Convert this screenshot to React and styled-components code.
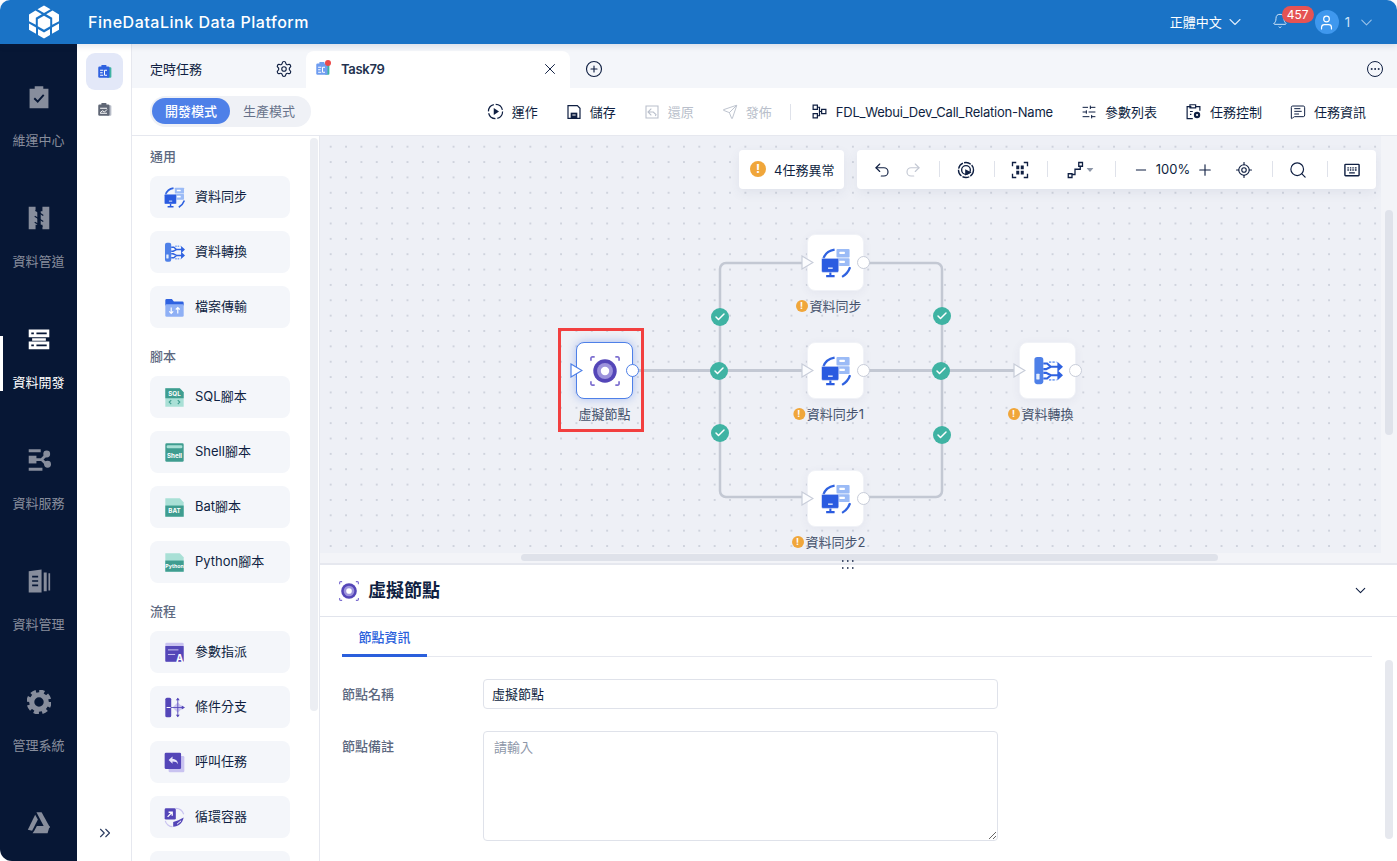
import React from 'react';
import styled, { createGlobalStyle } from 'styled-components';
import {
  ChevronDown, Bell, User, Settings, X, CirclePlus, Ellipsis, Undo2, Redo2, Minus, Plus, Search,
  LocateFixed, Send, SlidersHorizontal, MessageSquareText, ChevronsRight, Check,
} from 'lucide-react';

const Global = createGlobalStyle`
  html, body { margin: 0; padding: 0; height: 100%; overflow: hidden; background: #fff; }
  #root { height: 100%; }
  * { box-sizing: border-box; }
  body { font-family: Inter, "Noto Sans CJK TC", sans-serif; font-size: 13px; color: #0f1f42; }
`;

const Page = styled.div`height: 861px; display: flex; flex-direction: column; overflow: hidden;`;
const Header = styled.header`
  height: 44px; flex: none; background: #1a73c6; color: #fff; display: flex; align-items: center;
  border-radius: 10px 10px 0 0; padding-left: 28px; box-shadow: 0 2px 6px rgba(20,40,90,.12); position: relative; z-index: 2;
`;
const Title = styled.div`font-size: 16px; font-weight: 500; margin-left: 28px; letter-spacing: .52px;`;
const HeaderRight = styled.div`margin-left: auto; display: flex; align-items: center; padding-right: 21px;`;
const Lang = styled.div`display: flex; align-items: center; gap: 3px; margin-right: 27px; margin-top: -1px;`;
const BellWrap = styled.div`position: relative; width: 16px; height: 18px; margin-right: 27px; display: flex;`;
const Badge = styled.span`
  position: absolute; left: 10px; top: -7px; width: 32px; height: 17px; border-radius: 9px; background: #e55353; color: #fff;
  font-size: 12px; line-height: 17px; text-align: center;
`;
const Avatar = styled.div`width: 24px; height: 24px; border-radius: 50%; background: #3f98ee; display: flex; align-items: center; justify-content: center;`;
const UserName = styled.span`margin: 0 7px 0 6px; color: #cfe3f7; font-size: 13px;`;

const Body = styled.div`flex: 1; display: flex; min-height: 0;`;
const Nav = styled.nav`
  width: 77px; flex: none; background: #071735; border-radius: 0 0 0 12px; padding-top: 41px;
  display: flex; flex-direction: column;
`;
const NavItem = styled.div`
  position: relative; height: 121px; flex: none; display: flex; flex-direction: column; align-items: center; gap: 21px;
  color: ${p => (p.$active ? '#fff' : '#878d9c')}; font-size: 13px; line-height: 20px;
  &::before {
    content: ''; display: ${p => (p.$active ? 'block' : 'none')}; position: absolute; left: 0; top: 9px; width: 3px; height: 55px; background: #fff;
  }
`;
const Side = styled.aside`
  width: 55px; flex: none; background: #fff; border-right: 1px solid #e6e8ef; display: flex; flex-direction: column; align-items: center; padding: 9px 0 0; position: relative;
`;
const SideBtn = styled.div`
  width: 37px; height: 37px; border-radius: 9px; background: ${p => (p.$active ? '#e3e8f8' : 'transparent')};
  display: flex; align-items: center; justify-content: center; margin-bottom: ${p => (p.$active ? '2px' : '0')};
  margin-top: ${p => (p.$active ? '0' : '-1px')};
`;
const Expand = styled.div`margin-top: auto; margin-bottom: 19px; padding-left: 2px; color: #2b3c61; display: flex;`;

const Main = styled.main`flex: 1; min-width: 0; display: flex; flex-direction: column;`;
const TabBar = styled.div`height: 44px; flex: none; background: #f4f6fa; display: flex; align-items: flex-end;`;
const PlainTab = styled.div`width: 174px; height: 37px; display: flex; align-items: center; padding: 0 13px 2px 18px; justify-content: space-between; color: #0f1f42;`;
const ActiveTab = styled.div`
  width: 264px; height: 37px; background: #fff; border-radius: 8px 8px 0 0; display: flex; align-items: center; padding: 0 11px 2px 9px; font-weight: 500; color: #24324f;
`;
const TabName = styled.span`margin-left: 11px; flex: 1; font-weight: 600; letter-spacing: -.3px;`;
const AddBtn = styled.div`margin-left: 15px; height: 37px; display: flex; align-items: center; padding-bottom: 2px;`;
const MoreBtn = styled.div`margin-left: auto; margin-right: 14px; height: 37px; display: flex; align-items: center; padding-bottom: 2px;`;
const DotsCircle = styled.span`width: 16px; height: 16px; border: 1.3px solid #0f1f42; border-radius: 50%; display: flex; align-items: center; justify-content: center;`;

const Toolbar = styled.div`height: 48px; flex: none; background: #fff; border-bottom: 1px solid #e6e8ef; display: flex; align-items: center; padding: 0 31px 0 18px;`;
const ModeSwitch = styled.div`width: 161px; height: 31px; border-radius: 16px; background: #eff1f6; padding: 2px; display: flex; align-items: flex-start;`;
const ModeBtn = styled.div`
  height: 26px; width: 78px; border-radius: 13px; text-align: center; line-height: 26px; font-size: 13px;
  background: ${p => (p.$active ? '#4e80e8' : 'transparent')}; color: ${p => (p.$active ? '#fff' : '#67728a')}; font-weight: ${p => (p.$active ? 500 : 400)};
`;
const Actions = styled.div`margin-left: auto; display: flex; align-items: center; gap: 28px;`;
const Action = styled.div`display: flex; align-items: center; gap: 8px; color: ${p => (p.$off ? '#b9bfcb' : '#0f1f42')}; white-space: nowrap;`;
const FlowName = styled.span`letter-spacing: -.22px;`;
const VRule = styled.span`width: 1px; height: 16px; background: #dfe2ea; flex: none; margin: 0 -8px 0 -10px;`;

const Content = styled.div`flex: 1; display: flex; min-height: 0;`;
const Palette = styled.div`width: 188px; flex: none; border-right: 1px solid #e6e8ef; padding: 0 29px 0 18px; overflow: hidden; position: relative;`;
const PaletteBar = styled.div`position: absolute; right: 1px; top: 2px; width: 8px; height: 573px; border-radius: 4px; background: #eceef3;`;
const SectionTitle = styled.div`color: #5c6880; font-weight: 500; line-height: 20px; margin: 18px 0 10px; &:first-child { margin-top: 10px; }`;
const Card = styled.div`
  height: 42px; border-radius: 8px; background: #f4f6fa; display: flex; align-items: center; gap: 10px; padding-left: 14px; margin-bottom: 13px; color: #0f1f42; white-space: nowrap;
  & > span { padding-bottom: 3px; }
`;

const Work = styled.div`flex: 1; min-width: 0; display: flex; flex-direction: column;`;
const CanvasFrame = styled.div`flex: 1; min-height: 0; background: #f3f4f8; padding: 0 16px 10px 0; position: relative; border-bottom: 2px solid #e6e8ef;`;
const Canvas = styled.div`
  width: 100%; height: 100%; position: relative; overflow: hidden; background-color: #eef0f6;
  background-image: radial-gradient(circle, #cfd3dd 1px, transparent 1.3px); background-size: 15.36px 15.36px; background-position: 3px 3px;
`;
const Edges = styled.svg`position: absolute; left: 0; top: 0; width: 100%; height: 100%;`;
const FloatRow = styled.div`position: absolute; top: 14px; right: 5px; display: flex; gap: 13px;`;
const FloatCard = styled.div`
  height: 39px; background: #fff; border-radius: 4px; box-shadow: 0 4px 12px rgba(60,75,120,.08); display: flex; align-items: center;
`;
const AlertCard = styled(FloatCard)`width: 105px; padding: 0 0 1px 11px; gap: 8px;`;
const ToolCard = styled(FloatCard)`width: 519px;`;
const Tool = styled.span`
  position: absolute; left: ${p => p.$x}px; top: 50%; transform: translate(-50%, -50%); display: flex; color: ${p => p.$c || '#0f1f42'}; white-space: nowrap;
`;
const ZoomText = styled(Tool)`margin-top: -1px;`;
const ToolRule = styled.span`position: absolute; left: ${p => p.$x}px; top: 11px; width: 1px; height: 16px; background: #dfe2ea;`;
const ToolInner = styled.div`position: relative; width: 100%; height: 100%;`;

const NodeWrap = styled.div`position: absolute; left: ${p => p.$x}px; top: ${p => p.$y}px; width: 57px; height: 57px;`;
const NodeBox = styled.div`
  width: 57px; height: 57px; border-radius: 8px; background: #fff; display: flex; align-items: center; justify-content: center;
  border: 1px solid ${p => (p.$sel ? '#4e80e8' : '#f0f2f7')};
  box-shadow: ${p => (p.$sel ? '0 0 10px rgba(80,125,235,.45)' : '0 2px 10px rgba(60,75,120,.06)')};
`;
const InPort = styled.svg`position: absolute; left: -6px; top: 21px;`;
const OutPort = styled.span`
  position: absolute; right: -6px; top: 22px; width: 13px; height: 13px; border-radius: 50%; background: #fff; border: 1.3px solid ${p => (p.$sel ? '#4e80e8' : '#c8cdd9')};
`;
const NodeLabel = styled.div`
  position: absolute; left: 50%; top: 62px; transform: translateX(-50%); white-space: nowrap; color: #45526c; line-height: 20px;
`;
const WarnDot = styled.span`
  position: absolute; right: calc(100% + 2px); top: 4px; width: 12px; height: 12px; border-radius: 50%; background: #f0a63a; color: #fff; font-size: 9px; font-weight: 700; line-height: 12px; text-align: center;
`;
const BigWarn = styled(WarnDot)`position: static; width: 16px; height: 16px; line-height: 16px; font-size: 12px; flex: none;`;
const Selection = styled.div`position: absolute; left: 238px; top: 192px; width: 86px; height: 104px; border: 3px solid #f23f3f;`;
const Check2 = styled.span`
  position: absolute; left: ${p => p.$x - 9}px; top: ${p => p.$y - 9}px; width: 18px; height: 18px; border-radius: 50%; background: #3fb3a3; color: #fff; display: flex; align-items: center; justify-content: center;
`;
const HBar = styled.div`position: absolute; left: 201px; bottom: 2px; width: 697px; height: 7px; border-radius: 4px; background: #dfe2ea;`;
const VBar = styled.div`position: absolute; right: 4px; top: 74px; width: 8px; height: 225px; border-radius: 4px; background: #dfe2ea;`;
const Grip = styled.svg`position: absolute; left: 521px; bottom: -7px; z-index: 1;`;

const Panel = styled.section`height: 296px; flex: none; background: #fff; position: relative; overflow: hidden;`;
const PanelHead = styled.div`height: 52px; border-bottom: 1px solid #e1e4ec; display: flex; align-items: center; padding: 0 28px 0 19px; gap: 9px;`;
const PanelTitle = styled.div`font-size: 18px; font-weight: 700; color: #0f1f42; margin-top: -3px;`;
const Chevron = styled.span`margin-left: auto; display: flex;`;
const Tabs = styled.div`height: 40px; margin: 0 25px 0 22px; border-bottom: 1px solid #e6e8ef; display: flex; align-items: flex-end;`;
const TabItem = styled.div`width: 85px; height: 41px; padding-top: 11px; text-align: center; color: #2a5fdc; font-weight: 500; border-bottom: 3px solid #2a5fdc; margin-bottom: -1px;`;
const Form = styled.div`padding: 22px 0 0 22px; display: grid; grid-template-columns: 141px 515px; row-gap: 22px;`;
const FieldLabel = styled.label`color: #5c6880; font-weight: 500; line-height: 30px;`;
const Input = styled.input`
  width: 515px; height: 30px; border: 1px solid #dfe2ea; border-radius: 4px; padding: 0 8px 2px; font: inherit; color: #0f1f42; outline: none; background: #fff;
`;
const Area = styled.textarea`
  width: 515px; height: 110px; border: 1px solid #dfe2ea; border-radius: 4px; padding: 5px 10px; font: inherit; outline: none; display: block; background: #fff;
  &::placeholder { color: #8d96a8; }
`;
const PanelBar = styled.div`position: absolute; right: 4px; top: 95px; width: 8px; height: 179px; border-radius: 4px; background: #e6e8ee;`;

/* ---------- drawings ---------- */
const I = ({ size = 24, box = 32, children }) => <svg width={size} height={size} viewBox={`0 0 ${box} ${box}`} fill="none" style={{ flex: 'none', display: 'block' }}>{children}</svg>;
const N = ({ children }) => <svg width="24" height="24" viewBox="2 2 28 28" fill="none" style={{ flex: 'none', display: 'block' }}>{children}</svg>;

const Logo = () => (
  <svg width="32" height="34" viewBox="0 0 32 34" style={{ flex: 'none' }} fill="#fff">
    <path d="M16 .5l6.500 3.700L16 8 9.500 4.200z" />
    <path d="M7.500 5.600l6.300 3.700-6 3.500v7L1 16.200V9.400z" />
    <path d="M24.500 5.600L31 9.400v6.800l-6.800 3.600v-7l-6-3.500z" />
    <path d="M16 10.800l6.200 3.500v6.900L16 24.800l-6.200-3.600v-6.900z" />
    <path d="M1 18.600l7 4v6.200l-7-4zM31 18.600v6.200l-7 4v-6.200z" />
    <path d="M10 24l6 3.400 6-3.400v6.100L16 33.500l-6-3.400z" />
  </svg>
);
const NavCheck = () => <N><path d="M5 6.500h6V3.500h10v3h6V29H5z" fill="currentColor" /><path d="M10.500 17.500l4 4 7-8" stroke="#071735" strokeWidth="2.200" /></N>;
const NavPipe = () => <N><path d="M4 3h8v5h2v16h-2v5H4zM28 3v26h-8v-5h-2V8h2V3z" fill="currentColor" /><path d="M12 7l9 6M11 14l10 6M11 21l9 5" stroke="#071735" strokeWidth="1.500" /></N>;
const NavDev = () => <N><path d="M4 5h24v9H4zM8 15h16v3H8zM4 19h24v9H4z" fill="currentColor" /><path d="M7 9.500h3M13 9.500h12M7 23.500h3M13 23.500h12" stroke="#071735" strokeWidth="2.200" /></N>;
const NavSvc = () => <N><path d="M4 3.500h14v3.500H4zM4 25h16v3.500H4z" fill="currentColor" /><path d="M4 11h9v9H4z" fill="currentColor" /><path d="M12 15.500h7l7-7M19 15.500l7 7" stroke="currentColor" strokeWidth="3.200" /><circle cx="25" cy="9" r="4" fill="currentColor" /><circle cx="26" cy="21" r="4" fill="currentColor" /></N>;
const NavData = () => <N><path d="M4 4.500l15-2v27H4z" fill="currentColor" /><path d="M21.500 6h3.500v22h-3.500zM27 7h2v20h-2z" fill="currentColor" /><path d="M8 11h7M8 16h7M8 21h7" stroke="#071735" strokeWidth="2" /></N>;
const NavGear = () => <N><circle cx="16" cy="16" r="8.500" stroke="currentColor" strokeWidth="6" /><circle cx="16" cy="16" r="12.500" stroke="currentColor" strokeWidth="4.200" strokeDasharray="6 3.800" /></N>;
const NavDrive = () => <N><path d="M13 3.500h6l10 18h-6.500z" fill="currentColor" /><path d="M11.500 6.500l3.200 5.500L8 25l-5-1z" fill="currentColor" /><path d="M10.500 25l3-5.500h15L26 28H8.500z" fill="currentColor" /></N>;

const TaskIcon = ({ dot }) => (
  <span style={{ position: 'relative', display: 'flex' }}>
    <I size={15} box={24}>
      <rect x="16" y="5" width="7" height="17" rx="1.500" fill="#3fb3a3" />
      <rect x="2" y="4" width="18" height="18" rx="2" fill={dot ? '#6f9df0' : '#2f62e0'} />
      <rect x="7" y="1.500" width="8" height="4" rx="1" fill={dot ? '#6f9df0' : '#2f62e0'} />
      <path d="M5 10h5M5 14h4M5 18h5M12 10h4M12 18h4M12 10v8" stroke="#fff" strokeWidth="1.700" />
    </I>
    {dot && <span style={{ position: 'absolute', right: -1, top: -1, width: 6, height: 6, borderRadius: 3, background: '#ec4a4a' }} />}
  </span>
);
const TaskGray = () => (
  <I size={15} box={24}>
    <rect x="16" y="5" width="7" height="17" rx="1.500" fill="#b8bdc8" />
    <rect x="2" y="4" width="18" height="18" rx="2" fill="#5f6675" />
    <rect x="7" y="1.500" width="8" height="4" rx="1" fill="#5f6675" />
    <path d="M5 10h11M5 17l4-3 3 2 4-4M5 18h11" stroke="#fff" strokeWidth="1.600" />
  </I>
);
const Sync = ({ size = 21 }) => (
  <I size={size}>
    <rect x="16.500" y="1" width="14" height="9" rx="1" fill="#9bbbf6" />
    <rect x="16.500" y="10.800" width="14" height="8.500" rx="1" fill="#9bbbf6" />
    <rect x="19.500" y="4" width="6" height="2.500" rx=".8" fill="#fff" />
    <rect x="19.500" y="13.500" width="6" height="2.500" rx=".8" fill="#fff" />
    <path d="M2.500 11.500C4 6.500 8.500 2.700 14.500 1.700M31 20.500c-1.500 4.500-4.500 8-8.500 10.300" stroke="#2f62e0" strokeWidth="2.400" />
    <rect x=".5" y="11" width="18.500" height="15" rx="1.500" fill="#2a5be0" stroke="#fff" strokeWidth=".6" />
    <path d="M5.500 30h9M10 26V30" stroke="#2a5be0" strokeWidth="2.200" />
    <path d="M7.500 21.500h5" stroke="#fff" strokeWidth="1.300" />
  </I>
);
const Transform = ({ size = 21 }) => (
  <I size={size}>
    <rect x="1.500" y="1" width="9.500" height="29" rx="3" fill="#4e80e8" />
    <rect x="3.500" y="19" width="3.500" height="6" rx=".5" fill="#e6eefc" />
    <path d="M11 8h4l4 3.500h9M11 14h3l5-2.500M11 18h3l5 2.500M11 24h4l4-3.500h9" stroke="#2f62e0" strokeWidth="2.200" />
    <path d="M26 6l6 5.500-6 5.500zM26 15l6 5.500-6 5.500z" fill="#2f62e0" />
    <path d="M17 6.500h8M17 25.500h8" stroke="#7fa6f2" strokeWidth="2" strokeDasharray="2.500 1.200" />
  </I>
);
const Folder = () => (
  <I size={21}>
    <path d="M2 5a2 2 0 012-2h8l3 4h13a2 2 0 012 2v4H2z" fill="#2f62e0" />
    <rect x="2" y="11" width="28" height="19" rx="2" fill="#8fb0f5" />
    <path d="M11 16v9M8 22l3 3 3-3M21 25v-9M18 19l3-3 3 3" stroke="#fff" strokeWidth="1.800" />
  </I>
);
const Script = ({ label, top }) => (
  <I size={21}>
    <path d="M2 2h22l6 6v22H2z" fill="#a9e0d6" />
    {top ? <path d="M2 2h22l6 6v9H2z" fill="#3f9d90" /> : <rect x="2" y="13" width="28" height="17" fill="#3f9d90" />}
    <text x="16" y={top ? 13 : 25} textAnchor="middle" fontSize={label.length > 4 ? 8 : 9.500} fontWeight="700" fill="#fff" fontFamily="Inter, sans-serif">{label}</text>
    {top && <path d="M11 20l-3 3 3 3M21 20l3 3-3 3" stroke="#3f9d90" strokeWidth="1.800" />}
  </I>
);
const Shell = () => (
  <I size={21}>
    <rect x="2" y="2" width="28" height="28" rx="2" fill="#3f9d90" />
    <rect x="4" y="5" width="24" height="4.500" rx="2" fill="#a9e0d6" />
    <text x="16" y="24" textAnchor="middle" fontSize="9.500" fontWeight="700" fill="#fff" fontFamily="Inter, sans-serif">Shell</text>
  </I>
);
const Assign = () => (
  <I size={21}>
    <rect x="2" y="1" width="28" height="29" rx="2" fill="#c9c3f0" />
    <rect x="2" y="6" width="28" height="24" rx="1" fill="#5446b8" />
    <path d="M6 12h16M6 19h11" stroke="#c9c3f0" strokeWidth="1.500" />
    <text x="24" y="30" textAnchor="middle" fontSize="15" fontWeight="700" fill="#fff" fontFamily="Inter, sans-serif">A</text>
  </I>
);
const Branch = () => (
  <I size={21}>
    <rect x="2" y="1" width="9" height="30" rx="2.500" fill="#5446b8" />
    <path d="M21 8l8 8-8 8-8-8z" fill="#c9c3f0" />
    <path d="M21 2v28M4 16h26" stroke="#5446b8" strokeWidth="1.300" />
    <path d="M18 5l3-4 3 4zM18 27l3 4 3-4zM27 13l5 3-5 3z" fill="#5446b8" />
    <path d="M4 16h6" stroke="#fff" strokeWidth="1.500" />
  </I>
);
const CallTask = () => (
  <I size={21}>
    <rect x="7" y="6" width="24" height="25" rx="2" fill="#c9c3f0" />
    <rect x="1" y="1" width="25" height="25" rx="2" fill="#5446b8" />
    <path d="M7 12l6-5v3.500c6 0 8 4 8.500 8-2-3-4.500-4-8.500-4V18z" fill="#e8e6fa" />
  </I>
);
const Loop = () => (
  <I size={21}>
    <rect x="1" y="2" width="17" height="17" rx="2" fill="#5446b8" />
    <path d="M14 30c8 0 14-5 16-14l-8 4-8 3z" fill="#5446b8" />
    <path d="M18 2c6 0 10 3 12 9M2 21c1 5 6 9 11 9" stroke="#c9c3f0" strokeWidth="1.800" />
    <path d="M5.500 15l7-7M7 8h5.500v5.500" stroke="#fff" strokeWidth="2" />
    <path d="M26 21l-6 5" stroke="#fff" strokeWidth="1.500" />
  </I>
);
const Virtual = ({ size = 30 }) => (
  <I size={size}>
    <circle cx="16" cy="16" r="12.500" fill="#5446b8" />
    <circle cx="16" cy="16" r="8.500" fill="#9d93dc" />
    <circle cx="16" cy="16" r="4.500" fill="#fff" />
    <path d="M1 5V2.500A1.500 1.500 0 012.500 1H5M27 1h2.500A1.500 1.500 0 0131 2.500V5M31 27v2.500a1.500 1.500 0 01-1.500 1.500H27M5 31H2.500A1.500 1.500 0 011 29.500V27" stroke="#7d6fd0" strokeWidth="1.800" />
  </I>
);
const RunIcon = () => <I size={17} box={24}><circle cx="12" cy="12" r="10" stroke="#0f1f42" strokeWidth="1.700" strokeDasharray="13 2.700" /><path d="M9.500 7l7.500 5-7.500 5z" fill="#0f1f42" /></I>;
const SaveIcon = () => <I size={16} box={24}><path d="M3 2.500h14l4 4v15H3z" stroke="#0f1f42" strokeWidth="1.800" /><path d="M7 13h10v8.500H7z" fill="#0f1f42" /><path d="M9.500 16.500h5" stroke="#fff" strokeWidth="1.500" /></I>;
const RestoreIcon = () => <I size={16} box={24}><path d="M3 3h18v18H3z" stroke="#b9bfcb" strokeWidth="1.600" /><path d="M11 7l-5 5 5 5M6 12h8l4 4-1 2" stroke="#b9bfcb" strokeWidth="1.600" /></I>;
const FlowIcon = () => <I size={17} box={24}><path d="M3 3h6v6H3zM3 15h6v6H3zM15 9h6v6h-6z" stroke="#0f1f42" strokeWidth="1.700" /><path d="M9 6h3v12H9M12 12h3" stroke="#0f1f42" strokeWidth="1.700" /></I>;
const CtrlIcon = () => <I size={17} box={24}><path d="M9 5H3v17h8M15 5h6v6M7 2.500h8V7H7z" stroke="#0f1f42" strokeWidth="1.700" /><circle cx="17" cy="17" r="3" stroke="#0f1f42" strokeWidth="3" /><path d="M7 12h4M7 16h2" stroke="#0f1f42" strokeWidth="1.700" /></I>;
const ThumbIcon = () => <I size={19} box={24}><circle cx="12" cy="12" r="9.500" stroke="#0f1f42" strokeWidth="1.700" strokeDasharray="9 1.500" /><circle cx="12" cy="12" r="5.500" stroke="#0f1f42" strokeWidth="1.700" /><path d="M11 11l8 4-8 4z" fill="#0f1f42" /></I>;
const FitIcon = () => <I size={18} box={24}><path d="M2 7V2h5M17 2h5v5M22 17v5h-5M7 22H2v-5" stroke="#0f1f42" strokeWidth="1.800" /><path d="M7 6h4v5H7zM13 6h4v5h-4zM7 13h4v5H7zM13 13h4v5h-4z" fill="#0f1f42" /></I>;
const RouteIcon = () => <I size={18} box={24}><path d="M3 17h5v5H3zM17 2h5v5h-5z" stroke="#0f1f42" strokeWidth="1.700" /><path d="M8 18h4v-7h7V7" stroke="#0f1f42" strokeWidth="1.700" /></I>;
const KeysIcon = () => <I size={17} box={24}><rect x="2" y="4" width="20" height="16" rx="1" stroke="#0f1f42" strokeWidth="2" /><path d="M5.500 9h2M9 9h2M12.500 9h2M16 9h2.500M5.500 12h2M9 12h2M12.500 12h2M16 12h2.500M8 16h8" stroke="#0f1f42" strokeWidth="1.800" /></I>;

const navItems = [
  ['維運中心', <NavCheck />], ['資料管道', <NavPipe />], ['資料開發', <NavDev />, true],
  ['資料服務', <NavSvc />], ['資料管理', <NavData />], ['管理系統', <NavGear />], ['', <NavDrive />],
];
const sections = [
  ['通用', [['資料同步', <Sync />], ['資料轉換', <Transform />], ['檔案傳輸', <Folder />]]],
  ['腳本', [['SQL腳本', <Script label="SQL" top />], ['Shell腳本', <Shell />], ['Bat腳本', <Script label="BAT" />], ['Python腳本', <Script label="Python" />]]],
  ['流程', [['參數指派', <Assign />], ['條件分支', <Branch />], ['呼叫任務', <CallTask />], ['循環容器', <Loop />], ['', null]]],
];
const checks = [[400, 181], [399, 235], [400, 297], [622, 180], [621, 235], [622, 299]];
const nodes = [
  { x: 256, y: 206, name: '虛擬節點', icon: <Virtual />, sel: true },
  { x: 487, y: 98, name: '資料同步', icon: <Sync size={30} />, warn: true },
  { x: 487, y: 206, name: '資料同步1', icon: <Sync size={30} />, warn: true },
  { x: 487, y: 334, name: '資料同步2', icon: <Sync size={30} />, warn: true },
  { x: 699, y: 206, name: '資料轉換', icon: <Transform size={30} />, warn: true },
];

const Node = ({ x, y, name, icon, sel, warn }) => (
  <NodeWrap $x={x} $y={y}>
    <NodeBox $sel={sel}>{icon}</NodeBox>
    <InPort width="13" height="15" viewBox="0 0 13 15"><path d="M1 1l11 6.500L1 14z" fill={sel ? '#fff' : '#fbfcfe'} stroke={sel ? '#4e80e8' : '#c8cdd9'} strokeWidth="1.200" /></InPort>
    <OutPort $sel={sel} />
    <NodeLabel>{warn && <WarnDot>!</WarnDot>}{name}</NodeLabel>
  </NodeWrap>
);

export default function App() {
  return (
    <Page>
      <Global />
      <Header>
        <Logo />
        <Title>FineDataLink Data Platform</Title>
        <HeaderRight>
          <Lang>正體中文 <ChevronDown size={20} strokeWidth={1.300} color="#dcebfa" /></Lang>
          <BellWrap><Bell size={16} strokeWidth={1.400} color="#dcebfa" /><Badge>457</Badge></BellWrap>
          <Avatar><User size={17} strokeWidth={1.700} color="#fff" /></Avatar>
          <UserName>1</UserName>
          <ChevronDown size={19} strokeWidth={1.300} color="#9dc4ea" />
        </HeaderRight>
      </Header>
      <Body>
        <Nav>
          {navItems.map(([label, icon, active]) => (
            <NavItem key={label || 'drive'} $active={active}>{icon}{label && <span>{label}</span>}</NavItem>
          ))}
        </Nav>
        <Side>
          <SideBtn $active><TaskIcon /></SideBtn>
          <SideBtn><TaskGray /></SideBtn>
          <Expand><ChevronsRight size={18} strokeWidth={1.500} /></Expand>
        </Side>
        <Main>
          <TabBar>
            <PlainTab>定時任務<Settings size={18} strokeWidth={1.500} /></PlainTab>
            <ActiveTab>
              <TaskIcon dot />
              <TabName>Task79</TabName>
              <X size={18} strokeWidth={1.300} color="#0f1f42" />
            </ActiveTab>
            <AddBtn><CirclePlus size={18} strokeWidth={1.500} color="#0f1f42" /></AddBtn>
            <MoreBtn><DotsCircle><Ellipsis size={12} strokeWidth={2} color="#0f1f42" /></DotsCircle></MoreBtn>
          </TabBar>
          <Toolbar>
            <ModeSwitch><ModeBtn $active>開發模式</ModeBtn><ModeBtn>生產模式</ModeBtn></ModeSwitch>
            <Actions>
              <Action><RunIcon />運作</Action>
              <Action><SaveIcon />儲存</Action>
              <Action $off><RestoreIcon />還原</Action>
              <Action $off><Send size={16} strokeWidth={1.400} />發佈</Action>
              <VRule />
              <Action><FlowIcon /><FlowName>FDL_Webui_Dev_Call_Relation-Name</FlowName></Action>
              <Action><SlidersHorizontal size={16} strokeWidth={1.500} />參數列表</Action>
              <Action><CtrlIcon />任務控制</Action>
              <Action><MessageSquareText size={16} strokeWidth={1.500} />任務資訊</Action>
            </Actions>
          </Toolbar>
          <Content>
            <Palette>
              {sections.map(([title, items]) => (
                <React.Fragment key={title}>
                  <SectionTitle>{title}</SectionTitle>
                  {items.map(([name, icon]) => <Card key={name || 'more'}>{icon}{name && <span>{name}</span>}</Card>)}
                </React.Fragment>
              ))}
              <PaletteBar />
            </Palette>
            <Work>
              <CanvasFrame>
                <Canvas>
                  <Edges>
                    <g fill="none" stroke="#c3c8d3" strokeWidth="2.500">
                      <path d="M318 234.500H490" strokeWidth="3" />
                      <path d="M490 127H406a6 6 0 00-6 6V355a6 6 0 006 6H490" />
                      <path d="M540 127H616a6 6 0 016 6V355a6 6 0 01-6 6H540" />
                      <path d="M540 234.500H702" strokeWidth="3" />
                    </g>
                  </Edges>
                  {nodes.map(n => <Node key={n.name} {...n} />)}
                  {checks.map(([x, y]) => <Check2 key={`${x}-${y}`} $x={x} $y={y}><Check size={12} strokeWidth={3} /></Check2>)}
                  <Selection />
                  <FloatRow>
                    <AlertCard><BigWarn>!</BigWarn>4任務異常</AlertCard>
                    <ToolCard>
                      <ToolInner>
                        <Tool $x={25}><Undo2 size={18} strokeWidth={1.500} /></Tool>
                        <Tool $x={56} $c="#c3c8d3"><Redo2 size={18} strokeWidth={1.500} /></Tool>
                        <ToolRule $x={82} />
                        <Tool $x={109}><ThumbIcon /></Tool>
                        <ToolRule $x={137} />
                        <Tool $x={163}><FitIcon /></Tool>
                        <ToolRule $x={190} />
                        <Tool $x={218}><RouteIcon /></Tool>
                        <Tool $x={233}><svg width="7" height="4" viewBox="0 0 7 4"><path d="M0 0h7L3.500 4z" fill="#8d96a8" /></svg></Tool>
                        <ToolRule $x={258} />
                        <Tool $x={284}><Minus size={16} strokeWidth={1.500} /></Tool>
                        <ZoomText $x={316}>100%</ZoomText>
                        <Tool $x={348}><Plus size={18} strokeWidth={1.500} /></Tool>
                        <Tool $x={387}><LocateFixed size={18} strokeWidth={1.500} /></Tool>
                        <ToolRule $x={415} />
                        <Tool $x={441}><Search size={19} strokeWidth={1.500} /></Tool>
                        <ToolRule $x={470} />
                        <Tool $x={495}><KeysIcon /></Tool>
                      </ToolInner>
                    </ToolCard>
                  </FloatRow>
                </Canvas>
                <HBar />
                <VBar />
                <Grip width="14" height="10" viewBox="0 0 14 10"><path d="M1 1h1.500M6 1h1.500M11 1h1.500M1 8h1.500M6 8h1.500M11 8h1.500" stroke="#0f1f42" strokeWidth="1.300" /></Grip>
              </CanvasFrame>
              <Panel>
                <PanelHead>
                  <Virtual size={20} />
                  <PanelTitle>虛擬節點</PanelTitle>
                  <Chevron><ChevronDown size={17} strokeWidth={1.500} /></Chevron>
                </PanelHead>
                <Tabs><TabItem>節點資訊</TabItem></Tabs>
                <Form>
                  <FieldLabel>節點名稱</FieldLabel>
                  <Input readOnly value="虛擬節點" />
                  <FieldLabel>節點備註</FieldLabel>
                  <Area placeholder="請輸入" />
                </Form>
                <PanelBar />
              </Panel>
            </Work>
          </Content>
        </Main>
      </Body>
    </Page>
  );
}
